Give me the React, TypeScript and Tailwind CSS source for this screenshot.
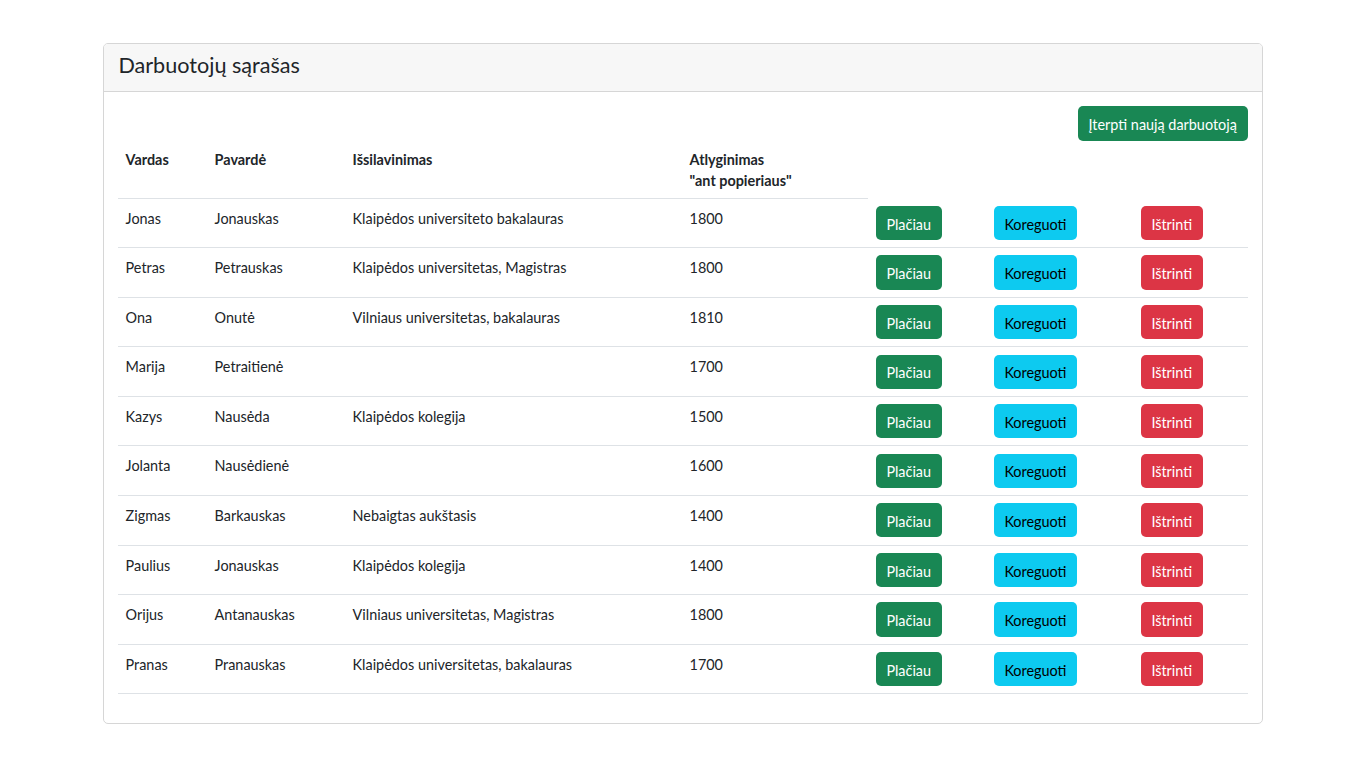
import React from 'react';

interface Employee {
  vardas: string;
  pavarde: string;
  issilavinimas: string;
  atlyginimas: number;
}

const employees: Employee[] = [
  { vardas: 'Jonas', pavarde: 'Jonauskas', issilavinimas: 'Klaipėdos universiteto bakalauras', atlyginimas: 1800 },
  { vardas: 'Petras', pavarde: 'Petrauskas', issilavinimas: 'Klaipėdos universitetas, Magistras', atlyginimas: 1800 },
  { vardas: 'Ona', pavarde: 'Onutė', issilavinimas: 'Vilniaus universitetas, bakalauras', atlyginimas: 1810 },
  { vardas: 'Marija', pavarde: 'Petraitienė', issilavinimas: '', atlyginimas: 1700 },
  { vardas: 'Kazys', pavarde: 'Nausėda', issilavinimas: 'Klaipėdos kolegija', atlyginimas: 1500 },
  { vardas: 'Jolanta', pavarde: 'Nausėdienė', issilavinimas: '', atlyginimas: 1600 },
  { vardas: 'Zigmas', pavarde: 'Barkauskas', issilavinimas: 'Nebaigtas aukštasis', atlyginimas: 1400 },
  { vardas: 'Paulius', pavarde: 'Jonauskas', issilavinimas: 'Klaipėdos kolegija', atlyginimas: 1400 },
  { vardas: 'Orijus', pavarde: 'Antanauskas', issilavinimas: 'Vilniaus universitetas, Magistras', atlyginimas: 1800 },
  { vardas: 'Pranas', pavarde: 'Pranauskas', issilavinimas: 'Klaipėdos universitetas, bakalauras', atlyginimas: 1700 },
];

// text cells sit a bit lower than the button cells
const td = 'px-[7.2px] pt-[9px] pb-[5.4px] align-top border-b border-[#dee2e6]';
const tdBtn = 'px-[7.2px] py-[7.2px] align-top border-b border-[#dee2e6]';
const th = 'px-[7.2px] pt-[8.2px] pb-[6.2px] align-top text-left font-bold border-b border-[#dee2e6]';
const btn = 'h-[34.2px] px-[10.8px] pt-[3px] rounded-[5px] text-[14.4px] leading-[21.6px]';

const App: React.FC = () => {
  return (
    <div className="min-h-[768px] bg-white pt-[43px] text-[#212529] text-[14.4px] leading-[21.6px] font-['Lato',sans-serif]">
      <div className="w-[1160px] mx-auto border border-[#d6d6d6] rounded-[5px] overflow-hidden">
        <div className="bg-[#f7f7f7] border-b border-[#d6d6d6] px-[14.4px] pt-[8px] pb-[12px]">
          <h3 className="text-[21.6px] leading-[27px] font-normal">Darbuotojų sąrašas</h3>
        </div>
        <div className="p-[14.4px]">
          <div className="flex justify-end">
            <button className={`${btn} bg-[#198754] text-white`}>Įterpti naują darbuotoją</button>
          </div>
          <table className="w-full border-collapse table-fixed mb-[14.4px]">
            <colgroup>
              <col className="w-[89px]" />
              <col className="w-[138px]" />
              <col className="w-[337px]" />
              <col className="w-[186px]" />
              <col className="w-[118px]" />
              <col className="w-[147px]" />
              <col className="w-[115px]" />
            </colgroup>
            <thead>
              <tr>
                <th className={th}>Vardas</th>
                <th className={th}>Pavardė</th>
                <th className={th}>Išsilavinimas</th>
                <th className={th}>
                  Atlyginimas
                  <br />
                  "ant popieriaus"
                </th>
              </tr>
            </thead>
            <tbody>
              {employees.map((e, i) => (
                <tr key={i}>
                  <td className={td}>{e.vardas}</td>
                  <td className={td}>{e.pavarde}</td>
                  <td className={td}>{e.issilavinimas}</td>
                  <td className={td}>{e.atlyginimas}</td>
                  <td className={tdBtn}>
                    <button className={`${btn} bg-[#198754] text-white`}>Plačiau</button>
                  </td>
                  <td className={tdBtn}>
                    <button className={`${btn} bg-[#0dcaf0] text-black`}>Koreguoti</button>
                  </td>
                  <td className={tdBtn}>
                    <button className={`${btn} bg-[#dc3545] text-white`}>Ištrinti</button>
                  </td>
                </tr>
              ))}
            </tbody>
          </table>
        </div>
      </div>
    </div>
  );
};

export default App;
